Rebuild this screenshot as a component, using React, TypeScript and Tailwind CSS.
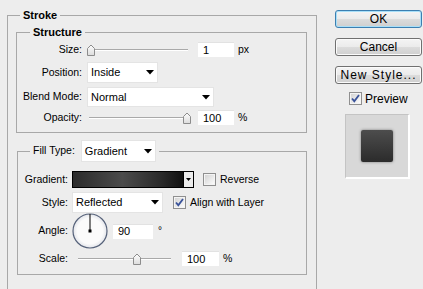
import React from "react";

function Slider({ width, thumb }: { width: number; thumb: number }) {
  return (
    <div className="relative h-[14px]" style={{ width }}>
      <div className="absolute left-[3px] right-[3px] top-[6px] h-[1px] bg-[#a9a9a9]" />
      <div className="absolute left-[3px] right-[3px] top-[7px] h-[1px] bg-white" />
      <svg className="absolute top-[1px]" style={{ left: thumb }} width="10" height="13" viewBox="0 0 10 13">
        <defs>
          <linearGradient id="th" x1="0" y1="0" x2="0" y2="1">
            <stop offset="0" stopColor="#fdfdfd" />
            <stop offset="1" stopColor="#dcdcdc" />
          </linearGradient>
        </defs>
        <path d="M1.5 4.5 L5 1 L8.5 4.5 L8.5 11.5 L1.5 11.5 Z" fill="url(#th)" stroke="#8c8c8c" />
      </svg>
    </div>
  );
}

function Select({ value, width, height }: { value: string; width: number; height: number }) {
  return (
    <div
      className="flex items-center justify-between bg-white border border-[#e4e4e4] pl-[3px] pr-[3px]"
      style={{ width, height }}
    >
      <span className="text-[11px]">{value}</span>
      <svg width="8" height="5" viewBox="0 0 8 5">
        <path d="M0 0 H8 L4 4.5 Z" fill="#000" />
      </svg>
    </div>
  );
}

function Field({ value, width }: { value: string; width: number }) {
  return (
    <div className="flex items-center h-[15px] bg-white border-t border-[#e2e2e2] pl-[5px]" style={{ width }}>
      <span className="text-[11px]">{value}</span>
    </div>
  );
}

function Check({ checked }: { checked?: boolean }) {
  return (
    <svg width="13" height="13" viewBox="0 0 13 13">
      <defs>
        <linearGradient id="cb" x1="0" y1="0" x2="1" y2="1">
          <stop offset="0" stopColor="#d4d4d4" />
          <stop offset="1" stopColor="#fbfbfb" />
        </linearGradient>
      </defs>
      <rect x="0.5" y="0.5" width="12" height="12" fill="#f4f4f4" stroke="#8f8f8f" />
      <rect x="2" y="2" width="9" height="9" fill="url(#cb)" />
      {checked && <path d="M3 6.5 L5.3 9.2 L10 3" fill="none" stroke="#3a539a" strokeWidth="1.8" />}
    </svg>
  );
}

function Button({ label, primary, wide }: { label: string; primary?: boolean; wide?: boolean }) {
  return (
    <div
      className={
        "h-[18px] w-[87px] rounded-[3px] border flex items-center justify-center text-[12px] bg-[linear-gradient(#f4f4f4,#ebebeb_50%,#dcdcdc_51%,#cfcfcf)] " +
        (primary ? "border-[#3c7fb1] shadow-[inset_0_0_0_1px_#a8dff8]" : "border-[#707070] shadow-[inset_0_0_0_1px_#fbfbfb]") +
        (wide ? " tracking-[1px]" : "")
      }
    >
      {label}
    </div>
  );
}

function Dial() {
  return (
    <svg width="36" height="36" viewBox="0 0 36 36">
      <defs>
        <radialGradient id="dl" cx="0.5" cy="0.5" r="0.5">
          <stop offset="0.75" stopColor="#fbfbfb" />
          <stop offset="1" stopColor="#e2e4ea" />
        </radialGradient>
      </defs>
      <circle cx="18" cy="18" r="17" fill="url(#dl)" stroke="#56627a" strokeWidth="1.2" />
      <line x1="18" y1="1" x2="18" y2="18" stroke="#000" strokeWidth="1" />
      <rect x="16.5" y="16.5" width="3" height="3" fill="#000" />
    </svg>
  );
}

export default function App() {
  return (
    <div className="w-[423px] h-[289px] overflow-hidden bg-[#ededed] flex items-start text-black text-[10.5px] font-['Liberation_Sans',Arial,sans-serif]">
      <fieldset className="ml-[7px] mt-[8px] w-[310px] border border-[#a8a8a8] pb-[40px]">
        <legend className="ml-[12px] px-[3px] h-[14px] leading-[14px] font-bold text-[11px]">Stroke</legend>

        <fieldset className="ml-[8px] mt-[3px] w-[291px] border border-[#a8a8a8] pb-[7px]">
          <legend className="ml-[13px] px-[3px] h-[14px] leading-[14px] font-bold text-[11px]">Structure</legend>
          <div className="flex items-center h-[15px] mt-[3px]">
            <span className="w-[65px] text-right">Size:</span>
            <div className="ml-[4px]">
              <Slider width={105} thumb={0} />
            </div>
            <div className="ml-[7px]">
              <Field value="1" width={36} />
            </div>
            <span className="ml-[4px]">px</span>
          </div>
          <div className="flex items-center h-[21px] mt-[5px]">
            <span className="w-[65px] text-right">Position:</span>
            <div className="ml-[5px]">
              <Select value="Inside" width={71} height={21} />
            </div>
          </div>
          <div className="flex items-center h-[20px] mt-[4px]">
            <span className="w-[65px] text-right">Blend Mode:</span>
            <div className="ml-[5px]">
              <Select value="Normal" width={127} height={20} />
            </div>
          </div>
          <div className="flex items-center h-[15px] mt-[3px]">
            <span className="w-[65px] text-right">Opacity:</span>
            <div className="ml-[4px]">
              <Slider width={105} thumb={96} />
            </div>
            <div className="ml-[7px]">
              <Field value="100" width={36} />
            </div>
            <span className="ml-[4px]">%</span>
          </div>
        </fieldset>

        <fieldset className="ml-[9px] mt-[7px] w-[290px] border border-[#a8a8a8] pb-[8px]">
          <legend className="ml-[12px] px-[3px]">
            <div className="flex items-center h-[22px]">
              <span>Fill Type:</span>
              <div className="ml-[6px]">
                <Select value="Gradient" width={75} height={22} />
              </div>
            </div>
          </legend>
          <div className="flex items-center h-[17px] mt-[9px]">
            <span className="w-[50px] text-right">Gradient:</span>
            <div className="ml-[4px] flex h-[17px] w-[122px] border border-black">
              <div className="flex-1 bg-[linear-gradient(to_right,#2b2b2b,#4b4b4b_45%,#2a2a2a_80%,#111)]" />
              <div className="w-[10px] border-l border-black bg-[#ececec] flex items-center justify-center">
                <svg width="5" height="3" viewBox="0 0 5 3">
                  <path d="M0 0 H5 L2.5 3 Z" fill="#000" />
                </svg>
              </div>
            </div>
            <div className="ml-[9px] flex">
              <Check />
            </div>
            <span className="ml-[4px]">Reverse</span>
          </div>
          <div className="flex items-center h-[21px] mt-[4px]">
            <span className="w-[50px] text-right">Style:</span>
            <div className="ml-[4px]">
              <Select value="Reflected" width={91} height={21} />
            </div>
            <div className="ml-[10px] flex">
              <Check checked />
            </div>
            <span className="ml-[4px]">Align with Layer</span>
          </div>
          <div className="flex items-center h-[36px]">
            <span className="w-[50px] text-right">Angle:</span>
            <div className="ml-[4px] flex">
              <Dial />
            </div>
            <div className="ml-[5px]">
              <Field value="90" width={40} />
            </div>
            <span className="ml-[5px] self-start mt-[10px] text-[10px]">°</span>
          </div>
          <div className="flex items-center h-[15px] mt-[2px]">
            <span className="w-[50px] text-right">Scale:</span>
            <div className="ml-[7px]">
              <Slider width={99} thumb={57} />
            </div>
            <div className="ml-[8px]">
              <Field value="100" width={37} />
            </div>
            <span className="ml-[4px]">%</span>
          </div>
        </fieldset>
      </fieldset>

      <div className="ml-[18px] mt-[10px] w-[87px] flex flex-col">
        <Button label="OK" primary />
        <div className="mt-[10px]">
          <Button label="Cancel" />
        </div>
        <div className="mt-[10px]">
          <Button label="New Style..." wide />
        </div>
        <div className="mt-[8px] pl-[14px] flex items-center h-[13px]">
          <Check checked />
          <span className="ml-[3px] text-[12px]">Preview</span>
        </div>
        <div className="mt-[9px] ml-[10px] w-[65px] h-[65px] bg-[#d8d8d8] border-t border-l border-[#c4c4c4] border-r-2 border-b-2 border-r-white border-b-white flex items-center justify-center">
          <div className="w-[32px] h-[32px] rounded-[2px] bg-[linear-gradient(#4d4d4d,#2b2b2b)] shadow-[0_0_3px_rgba(0,0,0,0.45)]" />
        </div>
      </div>
    </div>
  );
}
